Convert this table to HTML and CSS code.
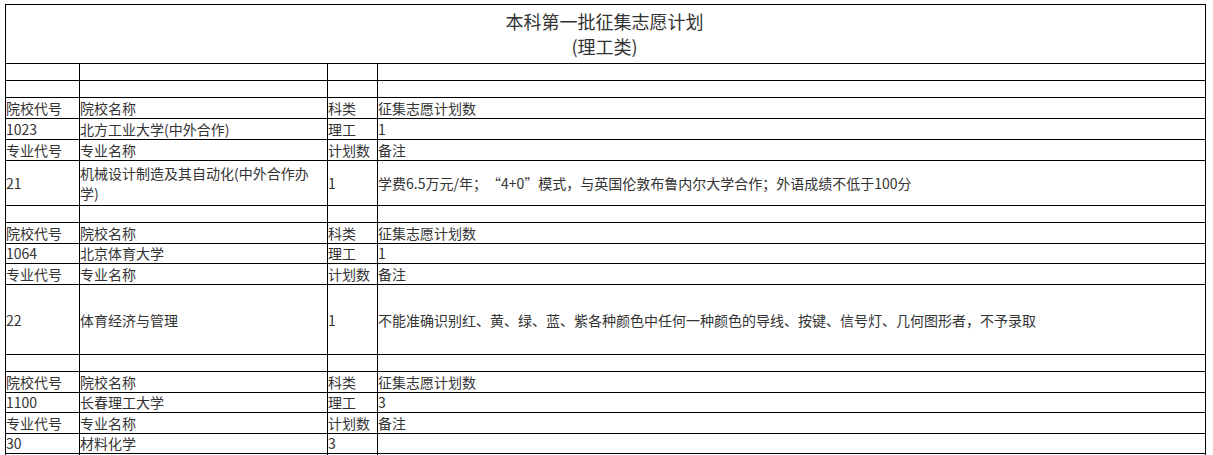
FILE: index.html
```html
<!DOCTYPE html>
<html lang="zh">
<head>
<meta charset="utf-8">
<title>本科第一批征集志愿计划</title>
<link rel="stylesheet" href="styles.css">
</head>
<body>
<table class="plan">
  <colgroup>
    <col class="c1"><col class="c2"><col class="c3"><col class="c4">
  </colgroup>
  <tr class="title-row"><td colspan="4" class="title">本科第一批征集志愿计划<br>(理工类)</td></tr>
  <tr class="empty"><td></td><td></td><td></td><td></td></tr>
  <tr class="empty"><td></td><td></td><td></td><td></td></tr>

  <tr class="row"><td>院校代号</td><td>院校名称</td><td>科类</td><td>征集志愿计划数</td></tr>
  <tr class="row"><td>1023</td><td>北方工业大学(中外合作)</td><td>理工</td><td>1</td></tr>
  <tr class="row"><td>专业代号</td><td>专业名称</td><td>计划数</td><td>备注</td></tr>
  <tr class="row two"><td>21</td><td>机械设计制造及其自动化(中外合作办学)</td><td>1</td><td>学费6.5万元/年；<span class="q-open">“</span>4+0<span class="q-close">”</span>模式，与英国伦敦布鲁内尔大学合作；外语成绩不低于100分</td></tr>
  <tr class="empty"><td></td><td></td><td></td><td></td></tr>

  <tr class="row"><td>院校代号</td><td>院校名称</td><td>科类</td><td>征集志愿计划数</td></tr>
  <tr class="row short"><td>1064</td><td>北京体育大学</td><td>理工</td><td>1</td></tr>
  <tr class="row"><td>专业代号</td><td>专业名称</td><td>计划数</td><td>备注</td></tr>
  <tr class="row tall"><td>22</td><td>体育经济与管理</td><td>1</td><td>不能准确识别红、黄、绿、蓝、紫各种颜色中任何一种颜色的导线、按键、信号灯、几何图形者，不予录取</td></tr>
  <tr class="empty"><td></td><td></td><td></td><td></td></tr>

  <tr class="row"><td>院校代号</td><td>院校名称</td><td>科类</td><td>征集志愿计划数</td></tr>
  <tr class="row short"><td>1100</td><td>长春理工大学</td><td>理工</td><td>3</td></tr>
  <tr class="row"><td>专业代号</td><td>专业名称</td><td>计划数</td><td>备注</td></tr>
  <tr class="row short"><td>30</td><td>材料化学</td><td>3</td><td></td></tr>
  <tr class="row"><td></td><td></td><td></td><td></td></tr>
</table>
</body>
</html>
```
FILE: styles.css
```css
html, body {
  margin: 0;
  padding: 0;
  background: #fff;
}
body {
  font-family: "Noto Sans CJK SC", "Noto Sans", sans-serif;
  font-size: 14px;
  color: #333;
}
.plan {
  border-collapse: collapse;
  table-layout: fixed;
  width: 1200px;
  margin: 4px 0 0 5px;
}
.c1 { width: 74px; }
.c2 { width: 248px; }
.c3 { width: 50px; }
.c4 { width: 828px; }
.plan td {
  border: 1px solid #000;
  padding: 0 2px 0 0;
  vertical-align: middle;
  line-height: 20px;
  white-space: normal;
  overflow: hidden;
}
.title-row td {
  height: 58px;
  text-align: center;
  font-size: 18px;
  line-height: 25px;
  color: #333;
}
.q-open,
.q-close {
  display: inline-block;
  width: 14px;
}
.q-open { text-align: right; }
.q-close { text-align: left; }
.empty td { height: 16px; }
.row td { height: 20px; }
.row.short td { height: 19px; line-height: 19px; }
.row.two td { height: 44px; }
.row.tall td { height: 69px; }
```
